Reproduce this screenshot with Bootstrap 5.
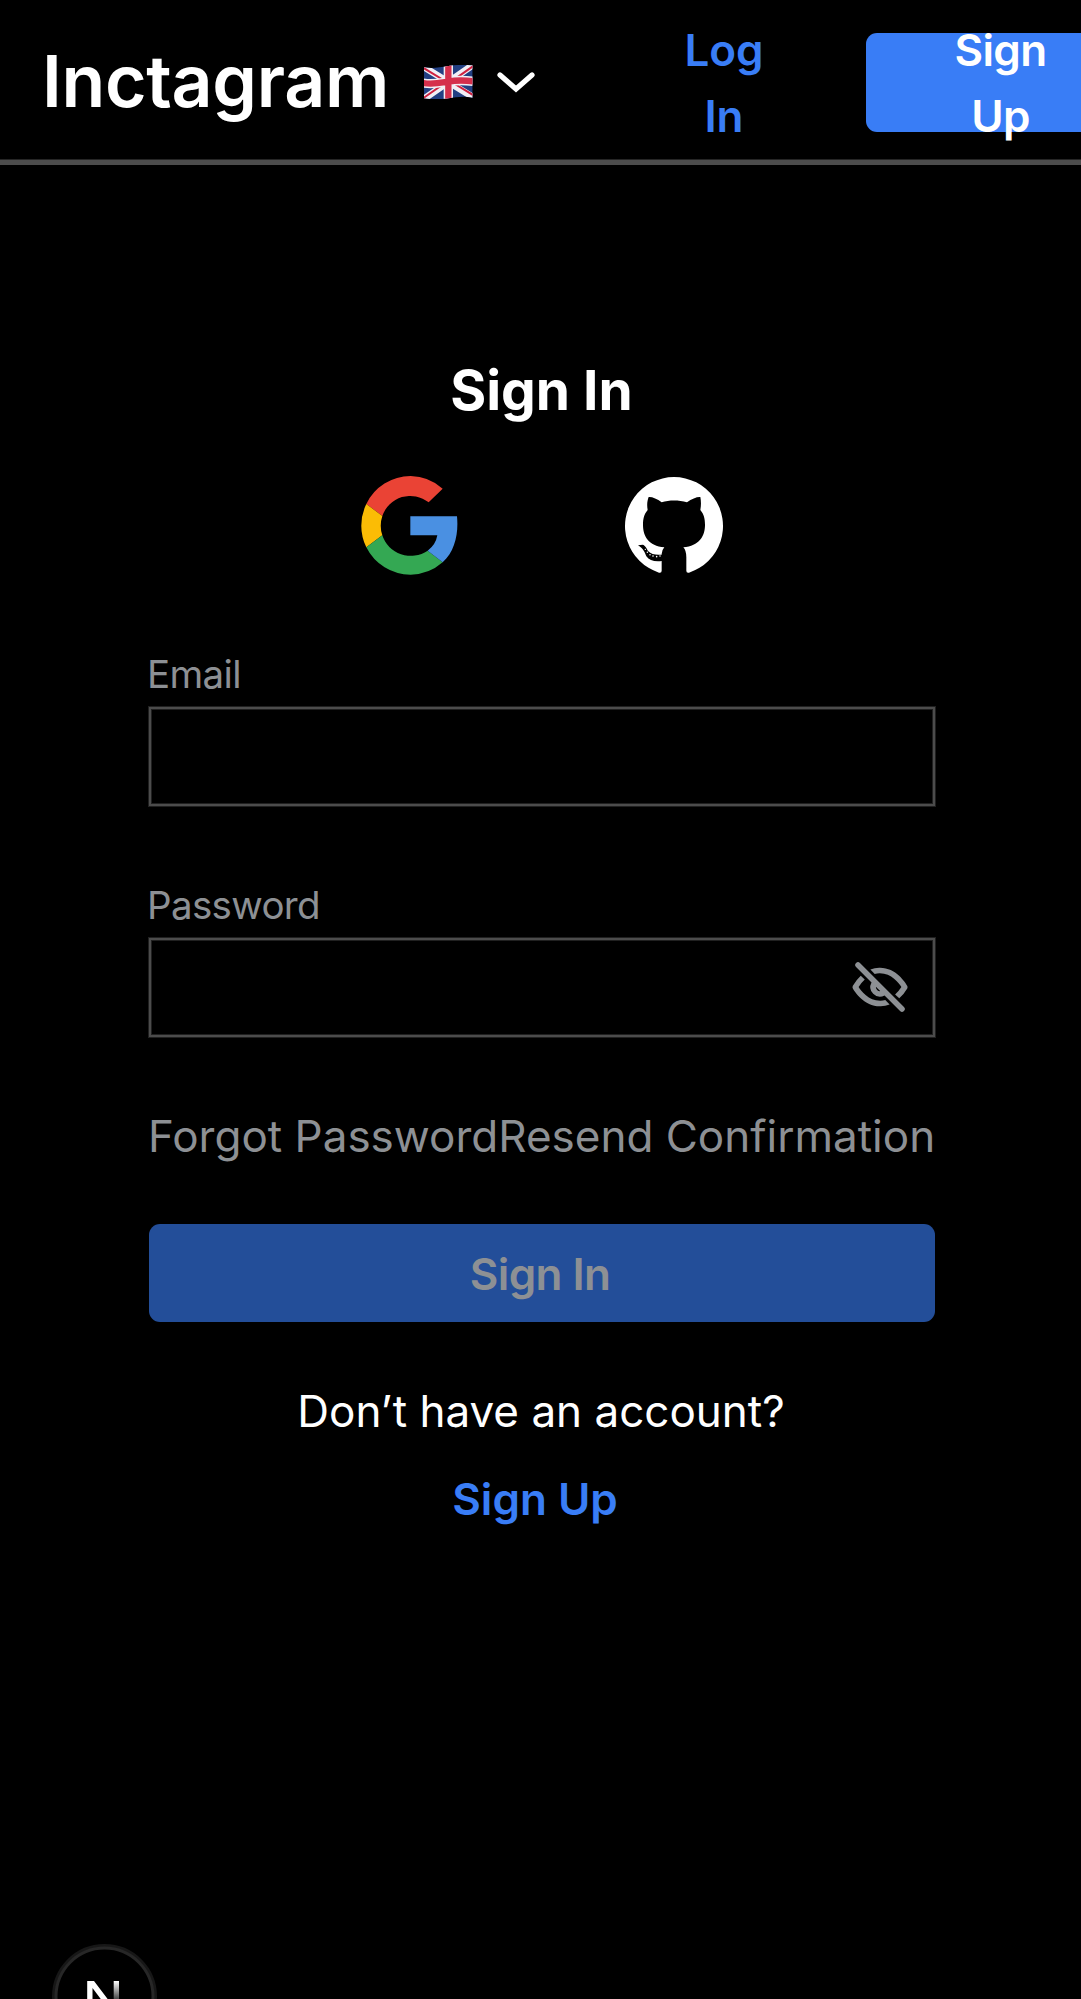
<!DOCTYPE html>
<html lang="en">
<head>
<meta charset="utf-8">
<meta name="viewport" content="width=device-width, initial-scale=1">
<title>Inctagram – Sign In</title>
<link href="https://cdn.jsdelivr.net/npm/bootstrap@5.3.0/dist/css/bootstrap.min.css" rel="stylesheet">
<style>
  body { background: #000; color: #fff; font-family: Inter, "Open Sans", sans-serif; font-size: 44px; line-height: 66px; min-height: 1999px; overflow: hidden; }
  svg { display: block; flex: none; }
  .topbar { height: 165px; border-bottom: 5px solid #4c4c4c; box-shadow: inset 0 -1px #262626; padding-left: 42px; padding-top: 5px; }
  .brand { font-size: 71.5px; line-height: 100px; font-weight: 600; width: 382px; letter-spacing: -.3px; padding-bottom: 3px; }
  .lang { gap: 24px; padding-bottom: 1px; }
  .login-link { width: 110px; margin-left: 134px; color: #397df6; }
  .signup-btn { width: 268px; height: 99px; margin-left: 87px; border-radius: 11px; background: #397df6; padding: 0 66px 0 67px; letter-spacing: -.6px; }
  .panel { width: 786px; margin: 188px auto 0 149px; }
  .panel h1 { font-size: 55px; line-height: 74px; padding-right: 1px; }
  .social { gap: 167px; padding-right: 1px; margin-top: 49px; height: 99px; }
  .grey { color: #8d9094; }
  .field-label { font-size: 38.5px; line-height: 66px; letter-spacing: -.65px; margin-left: -2px; }
  .field { height: 99px; border: 2px solid #4c4c4c; border-radius: 0; box-shadow: 0 0 0 1px #202020, inset 0 0 0 1px #202020; background: #000 !important; }
  .mail-group, .pass-group { margin-top: 66px; }
  .eye { margin: 0 20px 2px 0; }
  .help-links { margin: 66px 1px 0 -1px; }
  .submit { height: 98px; margin-top: 55px; border-radius: 11px; background: #234e99; letter-spacing: -.6px; }
  .submit span { display: block; padding: 2px 4px 0 0; }
  .ask { margin-top: 56px; padding-right: 2px; }
  .join { margin-top: 22px; color: #397df6; padding-right: 14px; }
  .dev-badge { position: fixed; left: 52px; top: 1944px; }
</style>
</head>
<body>
<header class="topbar d-flex align-items-center">
  <div class="brand flex-shrink-0">Inctagram</div>
  <div class="lang d-flex align-items-center flex-shrink-0">
    <svg width="49" height="34" viewBox="72 47 147 102">
      <clipPath id="wave"><path d="M72 54C98 58 119 54 145 50C170 46 195 46 218 48V145C190 139 170 143 145 147C115 151 95 150 72 147Z"/></clipPath>
      <g clip-path="url(#wave)">
        <path fill="#223f82" d="M70 45h150v106H70z"/>
        <path d="M70 52L220 144M70 150L220 46" stroke="#f1eff5" stroke-width="20"/>
        <path d="M66 53L145 101M224 140L145 92M66 149L145 94M224 47L145 103" stroke="#cf2140" stroke-width="6"/>
        <path d="M70 101C98 106 119 101 145 97C175 91 195 93 220 96M145 45V152" fill="none" stroke="#f1eff5" stroke-width="28"/>
        <path d="M70 101C98 106 119 101 145 97C175 91 195 93 220 96M145 45V152" fill="none" stroke="#d52f4c" stroke-width="19"/>
      </g>
    </svg>
    <svg width="38" height="22" viewBox="0 0 38 22"><path d="M3 4L19 18L35 4" fill="none" stroke="#fff" stroke-width="5.200" stroke-linecap="round"/></svg>
  </div>
  <a href="#" class="login-link text-center fw-semibold text-decoration-none flex-shrink-0">Log In</a>
  <a href="#" class="signup-btn d-flex align-items-center text-center text-white fw-semibold text-decoration-none flex-shrink-0"><span class="w-100">Sign Up</span></a>
</header>

<main class="panel">
  <h1 class="text-center fw-bold mb-0">Sign In</h1>
  <div class="social d-flex justify-content-center align-items-center">
    <svg width="97" height="99" viewBox="46 32 291 297">
      <path fill="#ea4335" d="M62 116A148 148 0 0 1 195 32A148 148 0 0 1 291 70L249 111A88 87 0 0 0 110 152Z"/>
      <path fill="#fbbc05" d="M62 116L110 152A92 92 0 0 0 110 210L62 246A149 148 0 0 1 62 116Z"/>
      <path fill="#34a853" d="M62 246L110 210A89 87 0 0 0 246 256L291 291A148 148 0 0 1 195 328A148 148 0 0 1 62 246Z"/>
      <path fill="#4a90e2" d="M194 153H334C339 205 328 258 291 291L246 256Q270 239 275 210H194Z"/>
    </svg>
    <svg width="98" height="97" viewBox="42 37 294 291">
      <path fill="#fff" d="M144 324A147 147 0 1 1 234 324Q226 326 226 318V278Q226 258 217 248C265 243 282 215 282 180C282 163 279 149 268 136C271 120 270 108 268 97C258 96 243 102 228 113C203 106 175 106 152 113C138 102 123 96 113 97C109 108 107 120 110 136C99 149 96 163 96 180C96 215 112 243 160 248Q152 257 152 268V318Q152 326 144 324Z"/>
      <path d="M81 242L95 240C103 242 107 252 112 260C120 269 135 272 153 270V289C130 292 115 287 106 275C101 262 97 252 81 242Z"/>
      <g fill="#fff"><circle cx="103" cy="254" r="2"/><circle cx="109" cy="263" r="2.200"/><circle cx="117" cy="270" r="2.300"/><circle cx="126" cy="274" r="2.400"/><circle cx="137" cy="276" r="2.400"/><circle cx="147" cy="274" r="2.300"/></g>
    </svg>
  </div>
  <form>
    <div class="mail-group">
      <label for="email" class="field-label grey d-block">Email</label>
      <input id="email" type="email" class="field form-control">
    </div>
    <div class="pass-group">
      <label for="password" class="field-label grey d-block">Password</label>
      <div class="field d-flex align-items-center justify-content-end">
        <input id="password" type="password" class="flex-grow-1 border-0 bg-transparent">
        <svg class="eye" width="66" height="66" viewBox="0 0 24 24" fill="#8d9094">
          <path d="M4.710 3.290a1 1 0 0 0-1.420 1.420l5.630 5.630a3.500 3.500 0 0 0 4.740 4.740l5.630 5.630a1 1 0 0 0 1.420 0 1 1 0 0 0 0-1.420zM12 13.500a1.500 1.500 0 0 1-1.500-1.500v-.07l1.560 1.560z"/>
          <path d="M12.220 17c-4.300.1-7.120-3.590-8-5a13.700 13.700 0 0 1 2.240-2.720L5 7.870a15.890 15.890 0 0 0-2.870 3.630 1 1 0 0 0 0 1c.63 1.090 4 6.500 9.890 6.500h.25a9.480 9.480 0 0 0 3.230-.67l-1.580-1.580a7.740 7.740 0 0 1-1.700.25z"/>
          <path d="M21.870 11.500c-.64-1.110-4.170-6.680-10.140-6.500a9.480 9.480 0 0 0-3.230.67l1.580 1.580a7.740 7.740 0 0 1 1.700-.25c4.290-.11 7.110 3.590 8 5a13.700 13.700 0 0 1-2.290 2.720L19 16.130a15.890 15.890 0 0 0 2.910-3.630 1 1 0 0 0-.04-1z"/>
        </svg>
      </div>
    </div>
    <div class="help-links d-flex justify-content-between text-nowrap">
      <a href="#" class="grey text-decoration-none">Forgot Password</a><a href="#" class="grey text-decoration-none">Resend Confirmation</a>
    </div>
    <button type="button" class="submit grey fw-semibold w-100 border-0 p-0 d-block"><span>Sign In</span></button>
  </form>
  <p class="ask text-center mb-0">Don’t have an account?</p>
  <a href="#" class="join d-block text-center fw-semibold text-decoration-none">Sign Up</a>
</main>

<svg class="dev-badge" width="105" height="105" viewBox="0 0 105 105">
  <defs><linearGradient id="fadeV" x1="0" y1="37" x2="0" y2="62" gradientUnits="userSpaceOnUse"><stop stop-color="#fff"/><stop offset="1" stop-color="#fff" stop-opacity="0"/></linearGradient></defs>
  <circle cx="52.500" cy="52.500" r="51" fill="#000" stroke="#171717" stroke-width="3"/>
  <circle cx="52.500" cy="52.500" r="48.500" fill="none" stroke="#272727" stroke-width="3"/>
  <path d="M35.200 37H42L70 74H63L40.500 44V70H35.200Z" fill="#fff"/>
  <path d="M61.700 37h5.300v30h-5.300z" fill="url(#fadeV)"/>
</svg>
<script src="https://cdn.jsdelivr.net/npm/bootstrap@5.3.0/dist/js/bootstrap.bundle.min.js"></script>
</body>
</html>
